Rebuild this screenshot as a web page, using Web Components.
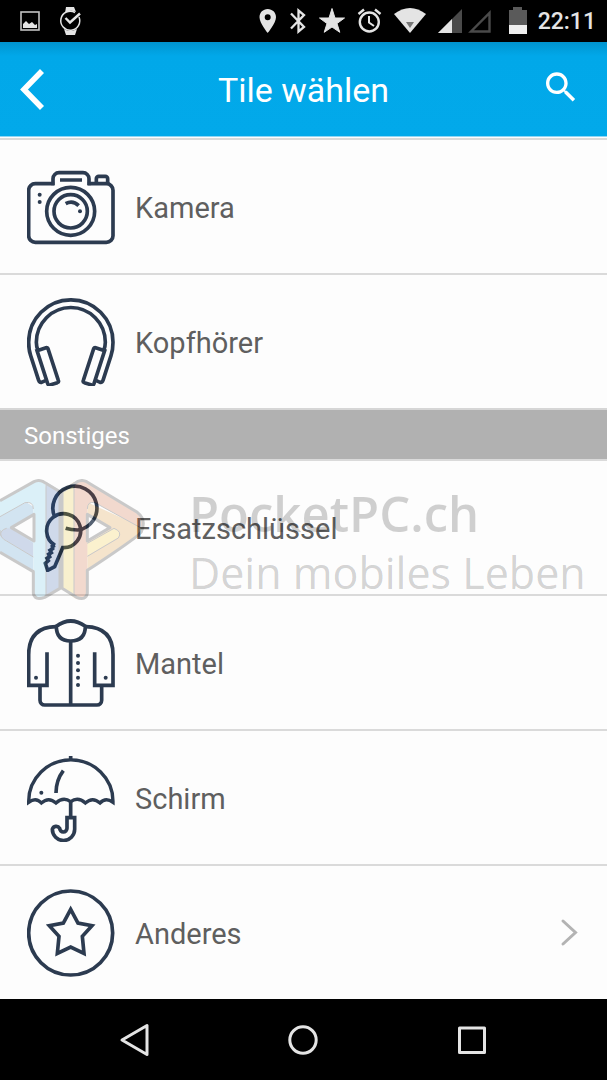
<!DOCTYPE html>
<html lang="de">
<head>
<meta charset="utf-8">
<meta name="viewport" content="width=device-width, initial-scale=1">
<title>Tile wählen</title>
<style>
  body { margin: 0; background: #fdfdfd; font-family: Roboto, "Liberation Sans", sans-serif; }
</style>
</head>
<body>
<tile-screen></tile-screen>

<script>
const define = (name, markup, setup) => {
  const template = document.createElement('template');
  template.innerHTML = markup;
  customElements.define(name, class extends HTMLElement {
    constructor() {
      super();
      this.attachShadow({ mode: 'open' }).append(template.content.cloneNode(true));
    }
    connectedCallback() { if (setup) setup(this, this.shadowRoot); }
  });
};

/* Line icons of the list, by name: [viewBox, shapes] */
const ICONS = {
  camera: ['51 9 264 264', `
    <path d="M133 71H76a20 20 0 0 0-20 20v136a20 20 0 0 0 20 20H289a20 20 0 0 0 20-20V91a20 20 0 0 0-20-20H233"/>
    <path d="M129 76V56a18 18 0 0 1 18-18H219a18 18 0 0 1 18 18V76M150 60H216"/>
    <path d="M259 71V56a7 7 0 0 1 7-7H286a7 7 0 0 1 7 7V71"/>
    <circle cx="182" cy="154" r="72"/><circle cx="182" cy="154" r="50"/>
    <path d="M167 131Q188 119 206 137"/>
    <g class="dot"><circle cx="89" cy="104" r="6"/><circle cx="89" cy="126" r="6"/><circle cx="210" cy="154" r="6"/></g>`],
  headphones: ['51 39 264 264', `
    <path d="M106 287L95 292Q88 293 86 286L62 212Q56 195 56 172a126 127 0 0 1 253 0Q309 195 303 212L279 286Q277 293 270 292L259 287"/>
    <path d="M84 197Q79 184 79 172a103 104 0 0 1 207 0Q286 184 281 197"/>
    <path d="M81 197L108 188Q112 187 114 191L145 286Q147 291 142 293L120 300Q115 301 113 296L81 197Z"/>
    <path d="M284 197L257 188Q253 187 251 191L220 286Q218 291 223 293L245 300Q250 301 252 296L284 197Z"/>`],
  keys: ['81 57 264 264', `
    <path d="M165 158A66 66 0 1 1 234 195Q213 195 197 190"/>
    <path d="M165 241A51 51 0 1 1 188 248L164 305 143 316 136 295 145 287 141 280 149 275 146 268 154 263 150 256 158 251 157 244 165 241"/>`],
  coat: ['51 42 264 264', `
    <path d="M138 65Q56 67 56 149V241H111V142M227 65Q309 67 309 149V241H254V142"/>
    <path d="M90 244V286a14 14 0 0 0 14 14H261a14 14 0 0 0 14-14V244M182 107V300"/>
    <path d="M139 64Q182 32 226 64Q226 108 182 108Q139 108 139 64Z"/>
    <g class="dot"><circle cx="204" cy="152" r="6"/><circle cx="204" cy="174" r="6"/><circle cx="204" cy="196" r="6"/><circle cx="204" cy="218" r="6"/><circle cx="204" cy="240" r="6"/><circle cx="78" cy="218" r="6"/><circle cx="287" cy="218" r="6"/></g>`],
  umbrella: ['51 27 264 264', `
    <path stroke-width="10" d="M56 172V169A126 124 0 0 1 309 169V172Q287 156 270 174Q248 154 226 174Q204 154 182 170Q160 154 138 174Q116 154 94 174Q78 156 56 172Z"/>
    <path d="M182 33V45M160 77Q138 106 138 144M182 168V218"/>
    <path d="M171 218H194V253A33 33 0 0 1 127 253A12 12 0 0 1 149 250A11 11 0 0 0 171 250Z"/>
    <g class="dot"><circle cx="94" cy="143" r="6"/></g>`],
  star: ['51 27 264 264', `
    <circle cx="182" cy="159" r="126"/>
    <path d="M182 88L204 129 246 137 217 169 222 220 182 201 142 220 147 169 118 137 160 129Z"/>`]
};

define('status-bar', `
  <style>
    :host { display: flex; justify-content: space-between; height: 42px; padding: 0 11px 0 18px; background: #000; color: #e4e4e4; }
    div { display: flex; gap: 10px; align-items: center; }
    .left { gap: 16px; }
    svg { display: block; height: 42px; fill: currentColor; }
    .line { fill: none; stroke: currentColor; }
    time { font-size: 23px; line-height: 42px; font-weight: 500; padding-top: 2px; }
  </style>
  <div class="left">
    <svg width="24" viewBox="18 0 24 42"><rect class="line" x="21" y="12" width="18" height="18" stroke-width="1.6" opacity=".85"/><path d="M23 28V24L26 21 29 24 32 22 35 25 37 24V28Z"/></svg>
    <svg width="24" viewBox="58 0 24 42"><path d="M65 13L66 7H74L76 12Q70 9 65 13ZM64 29Q70 33 77 29L75 35H66Z"/><path class="line" d="M79 17A9.500 9.500 0 1 1 75 12.500" stroke-width="1.500"/><path class="line" d="M65.500 18L70 22.500 80 13.500" stroke-width="2.400"/></svg>
  </div>
  <div>
    <svg width="20" viewBox="259 0 20 42"><path fill-rule="evenodd" d="M267.700 9C263 9 259.500 12.600 259.500 17.200C259.500 23 267.700 33 267.700 33S276 23 276 17.200C276 12.600 272.400 9 267.700 9ZM267.700 14.300A3 3 0 1 1 267.700 20.300A3 3 0 0 1 267.700 14.300Z"/></svg>
    <svg width="20" viewBox="289 0 20 42"><path class="line" d="M291 13.500L304 27 298.500 31.500V10.500L304 15 291 28.500" stroke-width="2.300"/></svg>
    <svg width="28" viewBox="319 0 28 42"><path d="M332 8.500L335 18H344.500L337 23.500 339.800 32.300 332 27 324.200 32.300 327 23.500 319.500 18H329Z" stroke="currentColor"/></svg>
    <svg width="26" viewBox="357 0 26 42"><g class="line"><circle cx="369.300" cy="22" r="9.500" stroke-width="2.400"/><path d="M369 16V22.500L374 26" stroke-width="2"/><path d="M358.500 14L364 9.500M380.500 14L375 9.500" stroke-width="2.400"/></g></svg>
    <svg width="34" viewBox="391 0 34 42"><path d="M392 14Q408 2 424 14L408 33Z"/><path d="M404 22H412L408 28Z" fill="#777"/></svg>
    <svg width="56" viewBox="436 0 56 42"><path d="M461 9V33H437Z" fill="#4a4a4a"/><path d="M451 19V33H437Z"/><path class="line" d="M488.500 13V31.500H470Z" stroke-width="2.400" style="color:#4a4a4a"/></svg>
    <svg width="25" viewBox="503 0 25 42"><path d="M509 10H513V7H522V10H527V34H509Z" fill="#5a5a5a"/><path d="M509 25H527V34H509Z" fill="#eee"/></svg>
    <time>22:11</time>
  </div>
`);

define('app-bar', `
  <style>
    :host { display: grid; grid-template-columns: 1fr auto 1fr; align-items: center; height: 94px; padding: 0 26px 0 16px; color: #fff;
      border-bottom: 1px solid #8fd6f4; background: linear-gradient(#0094cf, #01a8e9 14px, #02a9ea); }
    h1 { margin: 0 -10px 0 0; padding-top: 2px; font-size: 34px; line-height: 44px; font-weight: 400; }
    button { display: block; padding: 0; border: 0; background: none; color: inherit; }
    .search { justify-self: end; }
    svg { display: block; }
  </style>
  <button aria-label="Zurück"><svg width="32" height="48" viewBox="16 65 32 48" fill="none" stroke="currentColor" stroke-width="5.600"><path d="M42 71L24 89.500 42 108"/></svg></button>
  <h1><slot></slot></h1>
  <button class="search" aria-label="Suchen"><svg width="40" height="40" viewBox="0 1 24 24" fill="currentColor"><path d="M15.500 14h-.79l-.28-.27C15.410 12.590 16 11.110 16 9.500 16 5.910 13.090 3 9.500 3S3 5.910 3 9.500 5.910 16 9.500 16c1.610 0 3.090-.59 4.230-1.570l.27.28v.79l5 4.990L20.490 19l-4.990-5zm-6 0C7.010 14 5 11.990 5 9.500S7.010 5 9.500 5 14 7.010 14 9.500 11.990 14 9.500 14z"/></svg></button>
`);

define('tile-row', `
  <style>
    :host { display: block; border-top: 2px solid #dadada; }
    a { display: flex; align-items: center; gap: 20px; padding: 23px 27px 22px; color: #5f5f5f; text-decoration: none; font-size: 29px; line-height: 40px; }
    .icon { flex: none; width: 88px; height: 88px; fill: none; stroke: #2c3b50; stroke-width: 11; }
    .icon .dot { fill: #2c3b50; stroke: none; }
    .label { padding-top: 2px; }
    .more { display: none; margin-left: auto; }
    :host([more]) .more { display: block; }
  </style>
  <a href="#"><svg class="icon" aria-hidden="true"></svg><span class="label"><slot></slot></span>
  <svg class="more" width="20" height="32" viewBox="560 916 20 32" fill="none" stroke="#b3b3b3" stroke-width="3" stroke-linecap="round"><path d="M563 920L575.500 931.500 563 943"/></svg></a>
`, (host, root) => {
  const [box, shapes] = ICONS[host.getAttribute('icon')];
  const svg = root.querySelector('.icon');
  svg.setAttribute('viewBox', box);
  svg.innerHTML = shapes;
});

define('group-header', `
  <style>
    :host { display: block; border-top: 2px solid #d6d6d6; background: #b1b1b1; color: #fff; padding: 10px 24px 7px; }
    h2 { margin: 0; font-size: 24px; line-height: 32px; font-weight: 400; }
  </style>
  <h2><slot></slot></h2>
`);

define('water-mark', `
  <style>
    :host { display: flex; gap: 42px; pointer-events: none; white-space: nowrap; overflow: hidden;
      font-family: "Open Sans", "Noto Sans", sans-serif; color: rgba(0, 0, 0, .18); }
    svg { flex: none; opacity: .2; }
    p { margin: 0; line-height: 60px; }
    .name { font-size: 49px; font-weight: 600; padding-top: 8px; }
    .claim { font-size: 43px; font-weight: 400; }
  </style>
  <svg width="147" height="130" viewBox="0 30 441 390" aria-hidden="true">
    <path fill="#1e50a0" d="M138 50L182 78V370L138 398Z"/>
    <path fill="#2d82c3" d="M0 150L80 112 100 125V320L0 262Z"/>
    <path fill="#1e50a0" d="M20 190Q0 195 2 215L100 275V235L34 190Z"/>
    <path fill="#5abee6" d="M0 108L105 47Q138 45 138 70V390Q120 412 100 390V125Q95 108 75 113L0 156Z"/>
    <path fill="#e6be19" d="M184 78L222 50V398L184 370Z"/>
    <path fill="#d7820f" d="M262 112L425 185Q428 205 415 212L262 315Z"/>
    <path fill="#f5c319" d="M262 235L342 190Q362 195 358 215L262 272Z"/>
    <path fill="#c8501a" d="M222 52Q245 40 262 50L415 143Q432 160 424 190L285 113Q262 110 262 130V390Q240 412 222 398Z"/>
    <path fill="#fff" d="M100 150L36 188 100 226ZM264 150L328 188 264 226Z"/>
    <g fill="none" stroke="#000" stroke-width="3"><path d="M138 60V395M222 55V395M0 155L75 113Q100 108 100 132M0 195Q0 220 20 228L100 276M20 190Q0 195 2 212M262 132Q262 108 285 113L425 190M262 235L342 190Q368 200 355 219L262 274"/></g>
    <g fill="none" stroke="#000" stroke-width="9" stroke-linejoin="round"><path d="M0 107L102 50Q116 43 130 50L180 80V370L134 397Q104 408 100 385V320L0 262M186 80L232 50Q246 43 260 50L412 142Q440 164 424 200Q420 212 262 316V385Q258 408 230 397L186 370Z"/><path d="M102 148L34 188 102 228ZM262 148L330 188 262 228Z"/></g>
  </svg>
  <div><p class="name">PocketPC.ch</p><p class="claim">Dein mobiles Leben</p></div>
`);

define('nav-bar', `
  <style>
    :host { display: flex; height: 81px; padding: 0 51px; background: #000; }
    button { flex: 1; display: grid; place-items: center; padding: 0; border: 0; background: none; color: #e4e4e4; }
    svg { display: block; fill: none; stroke: currentColor; stroke-width: 3; stroke-linejoin: round; }
  </style>
  <button aria-label="Zurück"><svg width="36" height="36" viewBox="0 0 36 36"><path d="M5 18L30 3.500V32.500Z"/></svg></button>
  <button aria-label="Startseite"><svg width="36" height="36" viewBox="0 0 36 36"><circle cx="18" cy="18" r="13.200"/></svg></button>
  <button aria-label="Übersicht"><svg width="36" height="36" viewBox="0 0 36 36"><rect x="5.500" y="6" width="25" height="24.500"/></svg></button>
`);

define('tile-screen', `
  <style>
    :host { display: flex; flex-direction: column; min-height: 100vh; }
    main { flex: 1; padding-top: 1px; background: #fdfdfd; }
    section { position: relative; }
    water-mark { position: absolute; left: 0; right: 0; top: 67px; }
  </style>
  <status-bar></status-bar>
  <app-bar>Tile wählen</app-bar>
  <main>
    <tile-row icon="camera">Kamera</tile-row>
    <tile-row icon="headphones">Kopfhörer</tile-row>
    <section>
      <group-header>Sonstiges</group-header>
      <tile-row icon="keys">Ersatzschlüssel</tile-row>
      <tile-row icon="coat">Mantel</tile-row>
      <tile-row icon="umbrella">Schirm</tile-row>
      <tile-row icon="star" more>Anderes</tile-row>
      <water-mark></water-mark>
    </section>
  </main>
  <nav-bar></nav-bar>
`);
</script>
</body>
</html>
